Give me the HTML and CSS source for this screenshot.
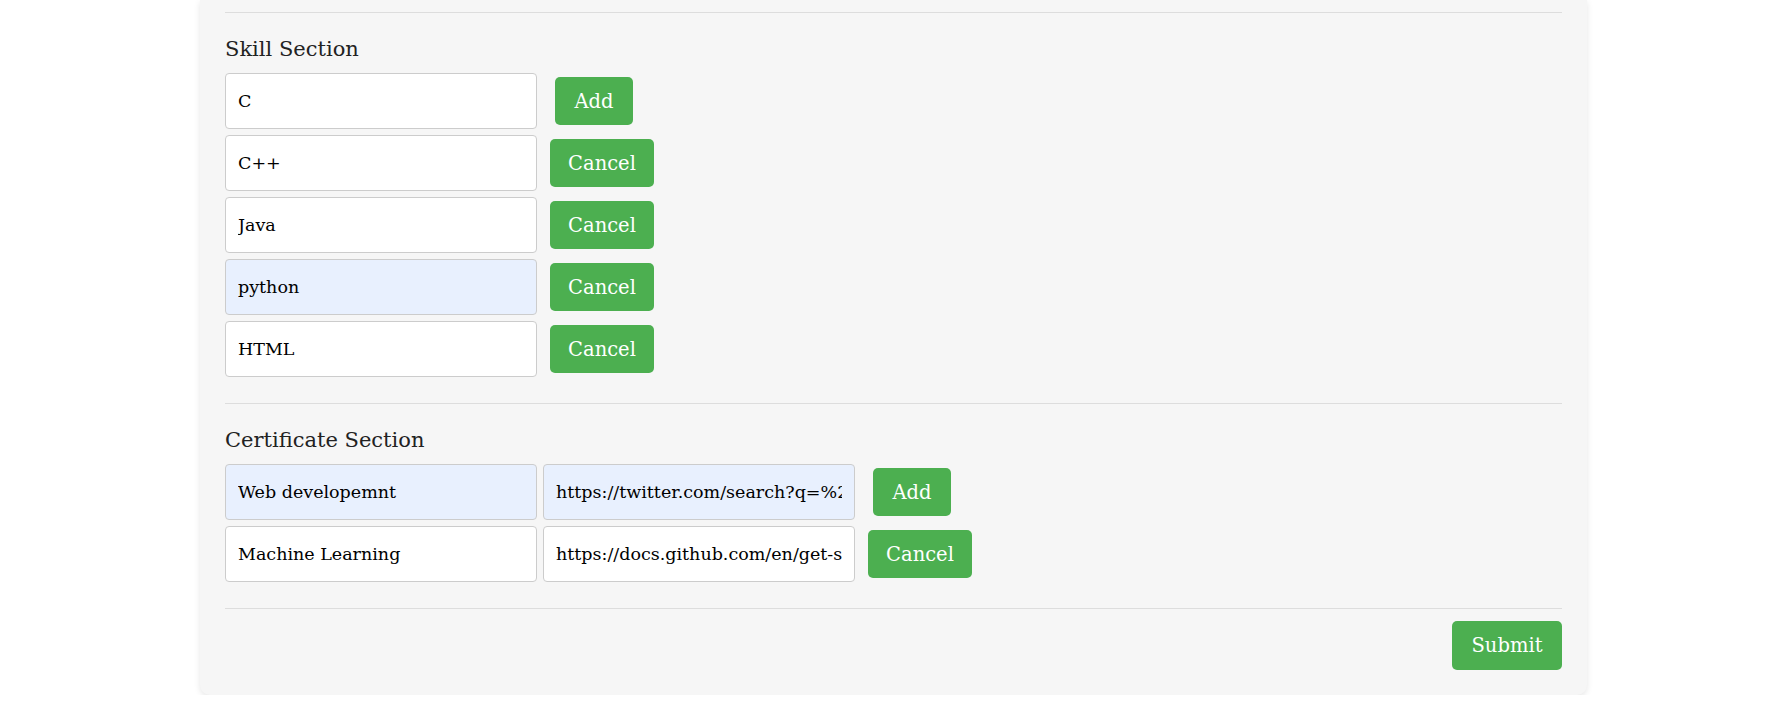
FILE: index.html
```html
<!DOCTYPE html>
<html lang="en">
<head>
<meta charset="utf-8">
<title>Skills and Certificates</title>
<link rel="stylesheet" href="styles.css">
</head>
<body>
<form class="card">
  <hr class="divider">
  <section class="section">
    <h2 class="section-title">Skill Section</h2>
    <div class="row">
      <input class="field" type="text" value="C">
      <button type="button" class="btn btn-add">Add</button>
    </div>
    <div class="row">
      <input class="field" type="text" value="C++">
      <button type="button" class="btn btn-cancel">Cancel</button>
    </div>
    <div class="row">
      <input class="field" type="text" value="Java">
      <button type="button" class="btn btn-cancel">Cancel</button>
    </div>
    <div class="row">
      <input class="field field-filled" type="text" value="python">
      <button type="button" class="btn btn-cancel">Cancel</button>
    </div>
    <div class="row">
      <input class="field" type="text" value="HTML">
      <button type="button" class="btn btn-cancel">Cancel</button>
    </div>
  </section>
  <hr class="divider">
  <section class="section">
    <h2 class="section-title">Certificate Section</h2>
    <div class="row">
      <input class="field field-filled field-first" type="text" value="Web developemnt">
      <input class="field field-filled" type="text" value="https://twitter.com/search?q=%23webdevelopment">
      <button type="button" class="btn btn-add">Add</button>
    </div>
    <div class="row">
      <input class="field field-first" type="text" value="Machine Learning">
      <input class="field" type="text" value="https://docs.github.com/en/get-started">
      <button type="button" class="btn btn-cancel">Cancel</button>
    </div>
  </section>
  <hr class="divider">
  <div class="footer">
    <button type="submit" class="btn btn-submit">Submit</button>
  </div>
</form>
</body>
</html>
```

FILE: styles.css
```css
html, body {
  margin: 0;
  padding: 0;
  background: #ffffff;
}

body {
  font-family: "DejaVu Serif", "Liberation Serif", serif;
  color: #222222;
}

.card {
  width: 1387px;
  margin: 0 auto;
  box-sizing: border-box;
  padding: 12px 25px 25px;
  background: #f6f6f6;
  border-radius: 0 0 10px 10px;
  box-shadow: 0 2px 6px rgba(0, 0, 0, 0.1);
}

.divider {
  margin: 0;
  border: 0;
  border-top: 1px solid #dddddd;
  height: 0;
}

.section {
  padding: 19px 0 20px;
}

.section-title {
  margin: 0 0 7px;
  font-size: 21px;
  line-height: 34px;
  font-weight: normal;
  color: #222222;
}

.row {
  display: flex;
  align-items: center;
  margin-bottom: 6px;
}

.field {
  box-sizing: border-box;
  width: 312px;
  height: 56px;
  padding: 0 12px;
  border: 1px solid #cccccc;
  border-radius: 4px;
  background: #ffffff;
  font-family: "DejaVu Serif", "Liberation Serif", serif;
  font-size: 17.5px;
  color: #000000;
  outline: none;
}

.field-filled {
  background: #e8f0fe;
}

.field-first {
  margin-right: 6px;
}

.btn {
  box-sizing: border-box;
  height: 48px;
  padding: 0;
  border: 0;
  border-radius: 5px;
  background: #4caf50;
  color: #ffffff;
  font-family: "DejaVu Serif", "Liberation Serif", serif;
  font-size: 19.5px;
  cursor: pointer;
}

.btn-add {
  margin-left: 18px;
  width: 78px;
}

.btn-cancel {
  margin-left: 13px;
  width: 104px;
}

.footer {
  display: flex;
  justify-content: flex-end;
  padding-top: 12px;
}

.btn-submit {
  width: 110px;
  height: 49px;
}
```
